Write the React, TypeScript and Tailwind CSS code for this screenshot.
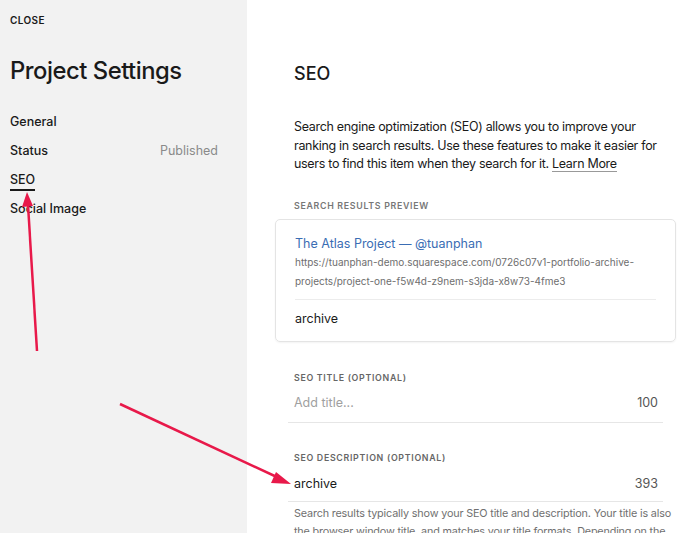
import React from "react";

export default function App() {
  const font = { fontFamily: "Inter, 'Noto Sans', sans-serif" };
  return (
    <div className="relative flex h-[533px] w-[700px] overflow-hidden bg-white text-[#1a1a1a]" style={font}>
      {/* Left panel */}
      <div className="flex w-[247px] shrink-0 flex-col bg-[#f2f2f2] pl-[10px] pr-[29px]">
        <div className="mt-[14px] text-[10px] font-semibold tracking-[0.04em] leading-[12px]">CLOSE</div>
        <div className="mt-[30px] text-[23.8px] font-medium leading-[30px] tracking-[-0.02em]">Project Settings</div>
        <div className="mt-[28px] flex flex-col text-[12.5px] font-medium">
          <div className="h-[29px] leading-[16px]">General</div>
          <div className="flex h-[29px] justify-between leading-[16px]">
            <span>Status</span>
            <span className="font-normal text-[#8a8a8a]">Published</span>
          </div>
          <div className="h-[29px] leading-[16px]">
            <span className="inline-block border-b-2 border-[#1a1a1a] pb-[1px]">SEO</span>
          </div>
          <div className="h-[29px] leading-[16px]">Social Image</div>
        </div>
      </div>

      {/* Right panel */}
      <div className="flex flex-1 flex-col pl-[28px] pr-[24px]">
        <div className="mt-[63px] pl-[19px] text-[18px] font-medium leading-[22px]">SEO</div>
        <p className="mt-[33px] whitespace-nowrap pl-[19px] text-[12.5px] leading-[18.5px] tracking-[-0.025em] text-[#1a1a1a]">
          Search engine optimization (SEO) allows you to improve your
          <br />
          ranking in search results. Use these features to make it easier for
          <br />
          users to find this item when they search for it.{" "}
          <span className="border-b border-[#999]">Learn More</span>
        </p>
        <div className="mt-[27px] pl-[19px] text-[8.8px] font-semibold tracking-[0.08em] text-[#777] leading-[10px]">SEARCH RESULTS PREVIEW</div>
        <div className="mt-[8px] rounded-[5px] border border-[#e4e4e4] px-[19px] pb-[14px] pt-[16px] shadow-[0_1px_2px_rgba(0,0,0,0.05)]">
          <div className="text-[12.5px] leading-[16px] text-[#3a6db4]">The Atlas Project — @tuanphan</div>
          <div className="mt-[1px] text-[10px] leading-[19px] text-[#6e6e6e]">
            https://tuanphan-demo.squarespace.com/0726c07v1-portfolio-archive-projects/project-one-f5w4d-z9nem-s3jda-x8w73-4fme3
          </div>
          <div className="mt-[8px] border-t border-[#ececec]" />
          <div className="mt-[11px] text-[12.5px] leading-[16px]">archive</div>
        </div>

        <div className="mt-[31px] pl-[19px] text-[8.8px] font-semibold tracking-[0.08em] text-[#666] leading-[10px]">SEO TITLE (OPTIONAL)</div>
        <div className="ml-[13px] mr-[13px] flex items-center justify-between border-b border-[#e6e6e6] pb-[11px] pl-[6px] pr-[5px] pt-[12px] text-[12.5px] leading-[16px]">
          <span className="text-[#a0a0a0]">Add title...</span>
          <span className="text-[#555]">100</span>
        </div>

        <div className="mt-[30px] pl-[19px] text-[8.8px] font-semibold tracking-[0.08em] text-[#666] leading-[10px]">SEO DESCRIPTION (OPTIONAL)</div>
        <div className="ml-[13px] mr-[13px] flex items-center justify-between border-b border-[#e6e6e6] pb-[9px] pl-[6px] pr-[5px] pt-[13px] text-[12.5px] leading-[16px]">
          <span>archive</span>
          <span className="text-[#555]">393</span>
        </div>
        <p className="mt-[3px] whitespace-nowrap pl-[19px] text-[10.8px] leading-[18px] tracking-[-0.015em] text-[#707070]">
          Search results typically show your SEO title and description. Your title is also
          <br />
          the browser window title, and matches your <span className="underline">title formats</span>. Depending on the
        </p>
      </div>

      {/* Red annotation arrows */}
      <svg className="pointer-events-none absolute left-0 top-0" width="700" height="533" viewBox="0 0 700 533">
        <line x1="37" y1="351" x2="28" y2="205" stroke="#e8194a" strokeWidth="2.5" />
        <polygon points="27,192 22,207 33,206" fill="#e8194a" />
        <line x1="120" y1="404" x2="279" y2="478" stroke="#e8194a" strokeWidth="2.5" />
        <polygon points="291,484 276,472 271,483" fill="#e8194a" />
      </svg>
    </div>
  );
}
